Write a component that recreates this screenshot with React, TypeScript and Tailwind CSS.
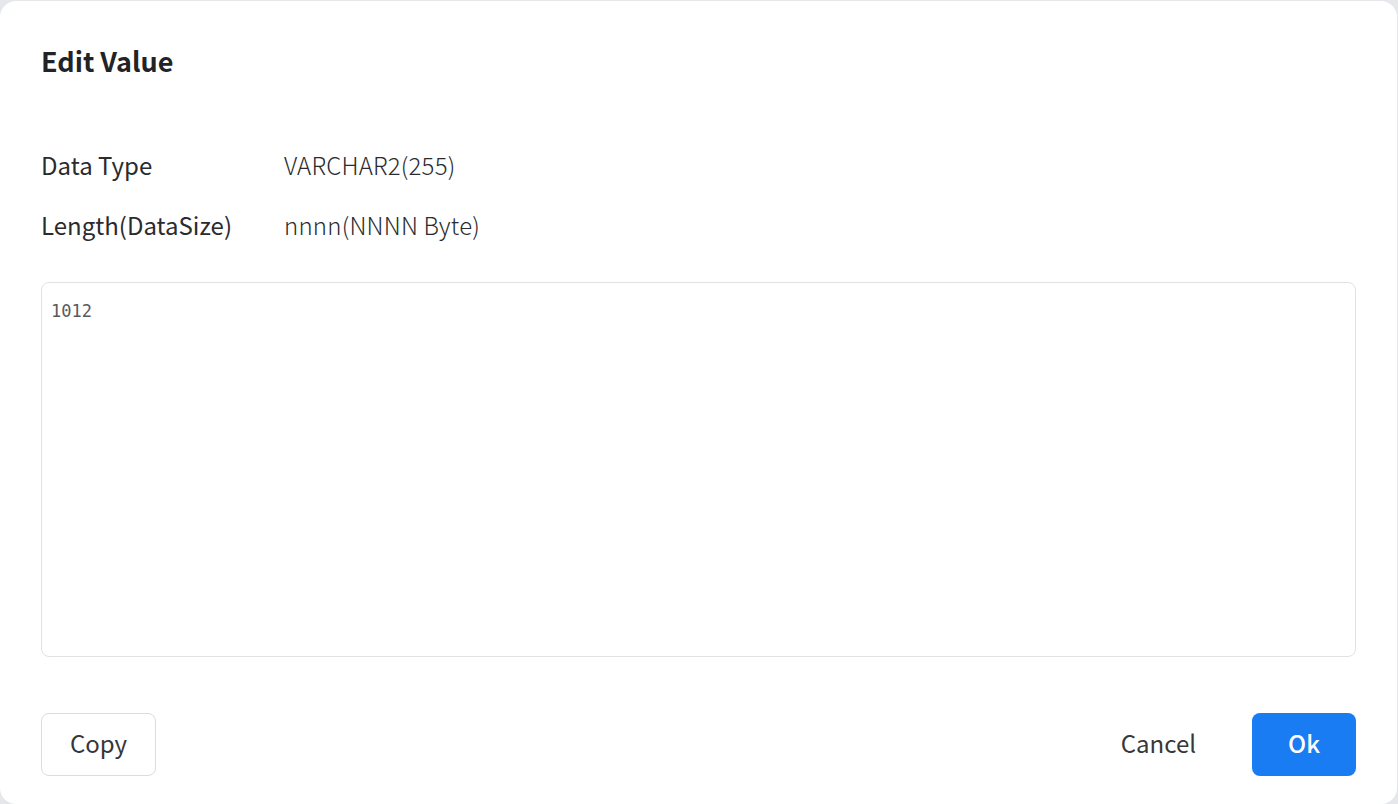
import React from "react";

export default function App() {
  const sans = { fontFamily: '"Noto Sans CJK KR", "Noto Sans", sans-serif' };
  return (
    <div className="w-[1398px] h-[804px] bg-[#e6e7eb] overflow-hidden pt-px" style={sans}>
      <div className="w-[1397px] h-[803px] bg-white rounded-2xl flex flex-col px-[41px] pt-[38px]">
        <h1 className="text-[27px] leading-[44px] font-bold text-[#222326]">Edit Value</h1>
        <div className="mt-[63px] flex flex-col gap-[22px]">
          <div className="flex items-center h-[38px]">
            <div className="w-[243px] text-[24px] text-[#2a2b2e]">Data Type</div>
            <div className="text-[24px] font-light tracking-[0.2px] text-[#2a2b2e]">VARCHAR2(255)</div>
          </div>
          <div className="flex items-center h-[38px]">
            <div className="w-[243px] text-[24px] text-[#2a2b2e]">Length(DataSize)</div>
            <div className="text-[24px] font-light tracking-[0.2px] text-[#2a2b2e]">nnnn(NNNN Byte)</div>
          </div>
        </div>
        <textarea
          className="mt-[38px] h-[375px] w-full border border-[#e2e2e4] rounded-lg px-[9px] py-[17px] text-[17px] leading-[22px] text-[#5a5a5e] resize-none outline-none"
          style={{ fontFamily: '"DejaVu Sans Mono", monospace', fontWeight: 300 }}
          defaultValue="1012"
        />
        <div className="mt-[56px] flex items-center">
          <button className="w-[115px] h-[63px] pb-[3px] border border-[#dcdce0] rounded-lg text-[24px] text-[#36373a] bg-white">
            Copy
          </button>
          <div className="flex-1" />
          <button className="h-[63px] pb-[3px] mr-[56px] text-[24px] text-[#36373a]">Cancel</button>
          <button className="w-[104px] h-[63px] pb-[3px] rounded-lg bg-[#1a7cf2] text-white text-[24px] font-medium">
            Ok
          </button>
        </div>
      </div>
    </div>
  );
}
